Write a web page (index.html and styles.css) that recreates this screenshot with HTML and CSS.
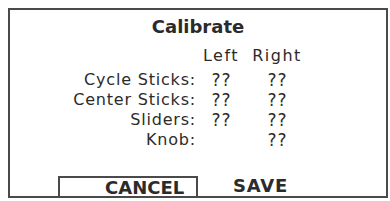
FILE: index.html
```html
<!DOCTYPE html>
<html>
<head>
<meta charset="utf-8">
<link rel="stylesheet" href="styles.css">
</head>
<body>
<div class="frame">
  <div class="title">Calibrate</div>
  <div class="table">
    <div class="lbl head"></div><div class="hd head">Left</div><div class="hd head">Right</div>
    <div class="lbl">Cycle Sticks:</div><div class="val">??</div><div class="val">??</div>
    <div class="lbl">Center Sticks:</div><div class="val">??</div><div class="val">??</div>
    <div class="lbl">Sliders:</div><div class="val">??</div><div class="val">??</div>
    <div class="lbl">Knob:</div><div class="val"></div><div class="val">??</div>
  </div>
  <div class="buttons">
    <div class="btn cancel">CANCEL</div>
    <div class="btn save">SAVE</div>
  </div>
</div>
</body>
</html>
```
FILE: styles.css
```css
html, body {
  margin: 0;
  padding: 0;
  background: #ffffff;
}
body {
  width: 390px;
  height: 201px;
  overflow: hidden;
  font-family: "DejaVu Sans", sans-serif;
  color: #2b2b2b;
}
.frame {
  box-sizing: border-box;
  margin: 8px 0 0 8px;
  width: 380px;
  height: 190px;
  border: 2px solid #4a4a4a;
  display: flex;
  flex-direction: column;
}
.title {
  margin-top: 7px;
  height: 20px;
  line-height: 20px;
  text-align: center;
  font-weight: bold;
  font-size: 18px;
}
.table {
  margin-top: 9px;
  display: grid;
  grid-template-columns: 186px 50px 62px;
  grid-template-rows: 24px;
  grid-auto-rows: 20px;
  font-size: 16px;
  letter-spacing: 0.8px;
  line-height: 20px;
}
.lbl {
  text-align: right;
}
.hd, .val {
  text-align: center;
}
.hd {
  letter-spacing: 1.5px;
}
.val {
  font-size: 17px;
  letter-spacing: 1px;
  padding-left: 1px;
}
.buttons {
  margin-top: auto;
  display: flex;
  height: 20px;
  align-items: stretch;
}
.btn {
  font-weight: bold;
  font-size: 18px;
  line-height: 20px;
}
.cancel {
  box-sizing: border-box;
  margin-left: 48px;
  width: 140px;
  border: 2px solid #4a4a4a;
  border-bottom: none;
  padding-left: 45px;
  line-height: 19px;
}
.save {
  margin-left: 35px;
  letter-spacing: 0.8px;
}
```
